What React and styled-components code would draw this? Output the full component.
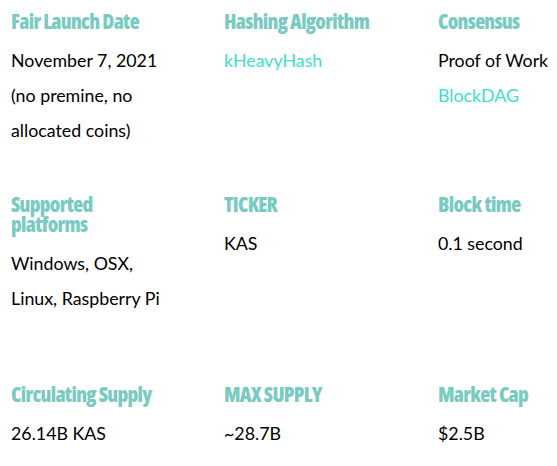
import styled, { createGlobalStyle } from "styled-components";

const GlobalStyle = createGlobalStyle`
  html, body {
    margin: 0;
    padding: 0;
    background: #ffffff;
  }
  body {
    font-family: Lato, "Liberation Sans", sans-serif;
  }
`;

const stats = [
  {
    title: "Fair Launch Date",
    lines: [
      { text: "November 7, 2021" },
      { text: "(no premine, no allocated coins)" },
    ],
  },
  { title: "Hashing Algorithm", lines: [{ text: "kHeavyHash", link: true }] },
  {
    title: "Consensus",
    lines: [{ text: "Proof of Work" }, { text: "BlockDAG", link: true }],
  },
  {
    title: "Supported platforms",
    lines: [{ text: "Windows, OSX, Linux, Raspberry Pi" }],
  },
  { title: "TICKER", lines: [{ text: "KAS" }] },
  { title: "Block time", lines: [{ text: "0.1 second" }] },
  { title: "Circulating Supply", lines: [{ text: "26.14B KAS" }] },
  { title: "MAX SUPPLY", lines: [{ text: "~28.7B" }] },
  { title: "Market Cap", lines: [{ text: "$2.5B" }] },
];

const App = () => {
  return (
    <>
      <GlobalStyle />
      <StatsGrid>
        {stats.map((item) => (
          <StatItem key={item.title}>
            <StatTitle>{item.title}</StatTitle>
            <StatBody>
              {item.lines.map((line) =>
                line.link ? (
                  <StatLink key={line.text} href="#">
                    {line.text}
                  </StatLink>
                ) : (
                  <StatText key={line.text}>{line.text}</StatText>
                )
              )}
            </StatBody>
          </StatItem>
        ))}
      </StatsGrid>
    </>
  );
};

export default App;

const StatsGrid = styled.div`
  display: grid;
  grid-template-columns: 213px 214px 130px;
  grid-template-rows: 183px 190px auto;
  padding: 11px 0 0 11px;
`;

const StatItem = styled.div`
  display: flex;
  flex-direction: column;
  align-items: flex-start;
`;

const StatTitle = styled.h3`
  margin: 0 0 12px;
  max-width: 150px;
  font-family: "Open Sans", sans-serif;
  font-stretch: 75%;
  font-weight: 800;
  font-size: 20.5px;
  letter-spacing: -0.7px;
  line-height: 20px;
  color: #79cbc2;
`;

const StatBody = styled.div`
  display: flex;
  flex-direction: column;
  max-width: 160px;
`;

const StatText = styled.div`
  font-size: 17.8px;
  line-height: 35px;
  color: #000000;
`;

const StatLink = styled.a`
  font-size: 17.8px;
  line-height: 35px;
  color: #40e0c8;
  text-decoration: none;
`;
